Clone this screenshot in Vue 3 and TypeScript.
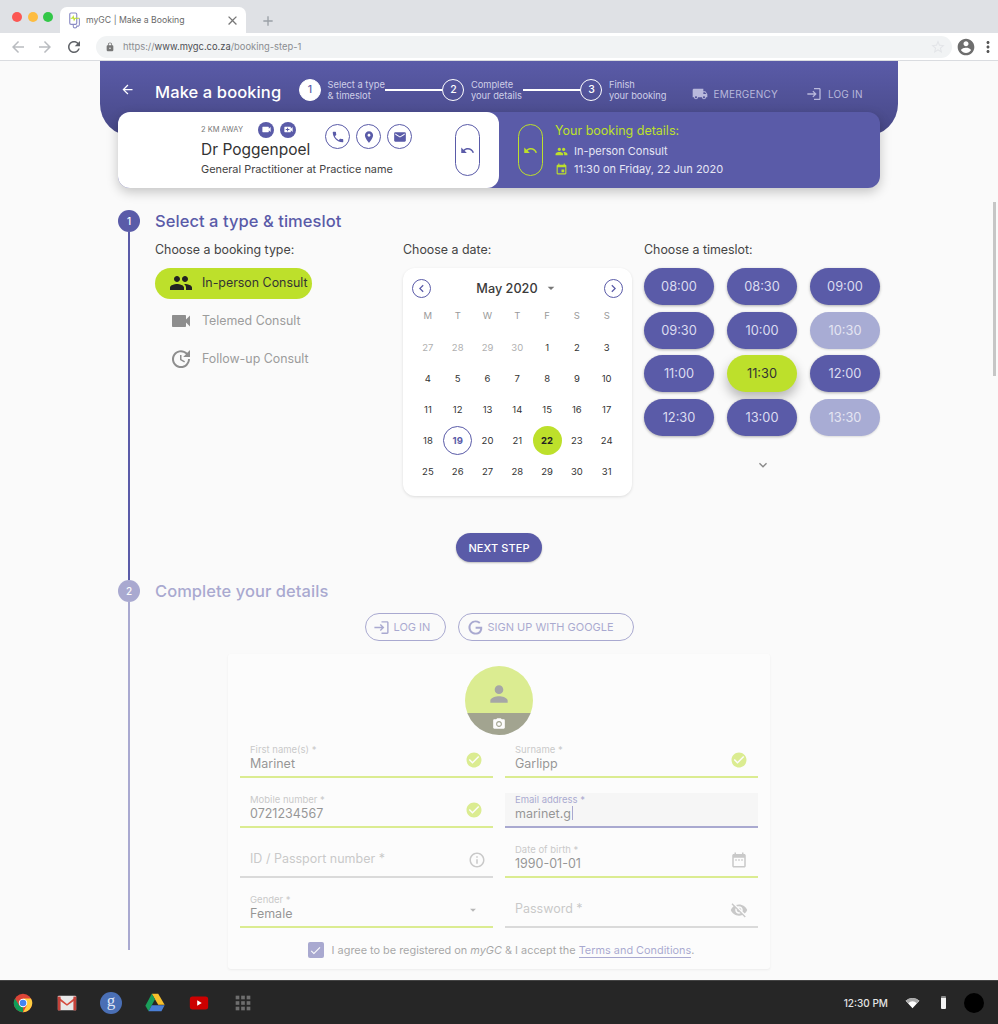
<script setup lang="ts">
const icons: Record<string, string> = {
  back: 'M20 11H7.83l5.59-5.59L12 4l-8 8 8 8 1.41-1.41L7.83 13H20v-2z',
  forward: 'M12 4l-1.41 1.41L16.17 11H4v2h12.17l-5.58 5.59L12 20l8-8z',
  refresh: 'M17.65 6.35C16.2 4.9 14.21 4 12 4c-4.42 0-7.99 3.58-7.99 8s3.57 8 7.99 8c3.73 0 6.84-2.55 7.73-6h-2.08c-.82 2.33-3.04 4-5.65 4-3.31 0-6-2.69-6-6s2.69-6 6-6c1.66 0 3.14.69 4.22 1.78L13 11h7V4l-2.35 2.35z',
  lock: 'M18 8h-1V6c0-2.76-2.24-5-5-5S7 3.24 7 6v2H6c-1.1 0-2 .9-2 2v10c0 1.1.9 2 2 2h12c1.1 0 2-.9 2-2V10c0-1.1-.9-2-2-2zm-6 9c-1.1 0-2-.9-2-2s.9-2 2-2 2 .9 2 2-.9 2-2 2zm3.1-9H8.9V6c0-1.71 1.39-3.1 3.1-3.1 1.71 0 3.1 1.39 3.1 3.1v2z',
  account: 'M12 2C6.48 2 2 6.48 2 12s4.48 10 10 10 10-4.48 10-10S17.52 2 12 2zm0 3c1.66 0 3 1.34 3 3s-1.34 3-3 3-3-1.34-3-3 1.34-3 3-3zm0 14.2c-2.5 0-4.71-1.28-6-3.22.03-1.99 4-3.08 6-3.08 1.99 0 5.97 1.09 6 3.08-1.29 1.94-3.5 3.22-6 3.22z',
  more: 'M12 8c1.1 0 2-.9 2-2s-.9-2-2-2-2 .9-2 2 .9 2 2 2zm0 2c-1.1 0-2 .9-2 2s.9 2 2 2 2-.9 2-2-.9-2-2-2zm0 6c-1.1 0-2 .9-2 2s.9 2 2 2 2-.9 2-2-.9-2-2-2z',
  star: 'M22 9.24l-7.19-.62L12 2 9.19 8.63 2 9.24l5.46 4.73L5.82 21 12 17.27 18.18 21l-1.63-7.03L22 9.24zM12 15.4l-3.76 2.27 1-4.28-3.32-2.88 4.38-.38L12 6.1l1.71 4.04 4.38.38-3.32 2.88 1 4.28L12 15.4z',
  close: 'M19 6.41L17.59 5 12 10.59 6.41 5 5 6.41 10.59 12 5 17.59 6.41 19 12 13.41 17.59 19 19 17.59 13.41 12z',
  add: 'M19 13h-6v6h-2v-6H5v-2h6V5h2v6h6v2z',
  login: 'M11 7L9.6 8.4l2.6 2.6H2v2h10.2l-2.6 2.6L11 17l5-5-5-5zm9 12h-8v2h8c1.1 0 2-.9 2-2V5c0-1.1-.9-2-2-2h-8v2h8v14z',
  truck: 'M20 8h-3V4H3c-1.1 0-2 .9-2 2v11h2c0 1.66 1.34 3 3 3s3-1.34 3-3h6c0 1.66 1.34 3 3 3s3-1.34 3-3h2v-5l-3-4zM6 18.5c-.83 0-1.5-.67-1.5-1.5s.67-1.5 1.5-1.5 1.5.67 1.5 1.5-.67 1.5-1.5 1.5zm13.5-9l1.96 2.5H17V9.5h2.5zm-1.5 9c-.83 0-1.5-.67-1.5-1.5s.67-1.5 1.5-1.5 1.5.67 1.5 1.5-.67 1.5-1.5 1.5zM8 7v2H6v2h2v2h2v-2h2V9h-2V7H8z',
  people: 'M16 11c1.66 0 2.99-1.34 2.99-3S17.66 5 16 5c-1.66 0-3 1.34-3 3s1.34 3 3 3zm-8 0c1.66 0 2.99-1.34 2.99-3S9.66 5 8 5C6.34 5 5 6.34 5 8s1.34 3 3 3zm0 2c-2.33 0-7 1.17-7 3.5V19h14v-2.5c0-2.33-4.67-3.5-7-3.5zm8 0c-.29 0-.62.02-.97.05 1.16.84 1.97 1.97 1.97 3.45V19h6v-2.5c0-2.33-4.67-3.5-7-3.5z',
  video: 'M17 10.5V7c0-.55-.45-1-1-1H4c-.55 0-1 .45-1 1v10c0 .55.45 1 1 1h12c.55 0 1-.45 1-1v-3.5l4 4v-11l-4 4z',
  videoCall: 'M17 10.5V7c0-.55-.45-1-1-1H4c-.55 0-1 .45-1 1v10c0 .55.45 1 1 1h12c.55 0 1-.45 1-1v-3.5l4 4v-11l-4 4zM14 13h-3v3H9v-3H6v-2h3V8h2v3h3v2z',
  update: 'M21 10.12h-6.78l2.74-2.82c-2.73-2.7-7.15-2.8-9.88-.1-2.73 2.71-2.73 7.08 0 9.79s7.15 2.71 9.88 0C18.32 15.65 19 14.08 19 12.1h2c0 1.98-.88 4.55-2.64 6.29-3.51 3.48-9.21 3.48-12.72 0-3.5-3.47-3.53-9.11-.02-12.58s9.14-3.47 12.65 0L21 3v7.12zM12.5 8v4.25l3.5 2.08-.72 1.21L11 13V8h1.5z',
  phone: 'M6.62 10.79c1.44 2.83 3.76 5.14 6.59 6.59l2.2-2.2c.27-.27.67-.36 1.02-.24 1.12.37 2.33.57 3.57.57.55 0 1 .45 1 1V20c0 .55-.45 1-1 1-9.39 0-17-7.61-17-17 0-.55.45-1 1-1h3.5c.55 0 1 .45 1 1 0 1.25.2 2.45.57 3.57.11.35.03.74-.25 1.02l-2.2 2.2z',
  place: 'M12 2C8.13 2 5 5.13 5 9c0 5.25 7 13 7 13s7-7.75 7-13c0-3.87-3.13-7-7-7zm0 9.5c-1.38 0-2.5-1.12-2.5-2.5s1.12-2.5 2.5-2.5 2.5 1.12 2.5 2.5-1.12 2.5-2.5 2.5z',
  email: 'M20 4H4c-1.1 0-1.99.9-1.99 2L2 18c0 1.1.9 2 2 2h16c1.1 0 2-.9 2-2V6c0-1.1-.9-2-2-2zm0 4l-8 5-8-5V6l8 5 8-5v2z',
  undo: 'M12.5 8c-2.65 0-5.05.99-6.9 2.6L2 7v9h9l-3.62-3.62c1.39-1.16 3.16-1.88 5.12-1.88 3.54 0 6.55 2.31 7.6 5.5l2.37-.78C21.08 11.03 17.15 8 12.5 8z',
  event: 'M17 12h-5v5h5v-5zM16 1v2H8V1H6v2H5c-1.11 0-1.99.9-1.99 2L3 19c0 1.1.89 2 2 2h14c1.1 0 2-.9 2-2V5c0-1.1-.9-2-2-2h-1V1h-2zm3 18H5V8h14v11z',
  left: 'M15.41 7.41L14 6l-6 6 6 6 1.41-1.41L10.83 12z',
  right: 'M10 6L8.59 7.41 13.17 12l-4.58 4.59L10 18l6-6z',
  expand: 'M16.59 8.59L12 13.17 7.41 8.59 6 10l6 6 6-6z',
  drop: 'M7 10l5 5 5-5z',
  person: 'M12 12c2.21 0 4-1.79 4-4s-1.79-4-4-4-4 1.79-4 4 1.79 4 4 4zm0 2c-2.67 0-8 1.34-8 4v2h16v-2c0-2.66-5.33-4-8-4z',
  camera: 'M9 2L7.17 4H4c-1.1 0-2 .9-2 2v12c0 1.1.9 2 2 2h16c1.1 0 2-.9 2-2V6c0-1.1-.9-2-2-2h-3.17L15 2H9zm3 15c-2.76 0-5-2.24-5-5s2.24-5 5-5 5 2.24 5 5-2.24 5-5 5zm0-8.2a3.2 3.2 0 1 0 0 6.4 3.2 3.2 0 0 0 0-6.4z',
  check: 'M12 2C6.48 2 2 6.48 2 12s4.48 10 10 10 10-4.48 10-10S17.52 2 12 2zm-2 15l-5-5 1.41-1.41L10 14.17l7.59-7.59L19 8l-9 9z',
  tick: 'M9 16.17L4.83 12l-1.42 1.41L9 19 21 7l-1.41-1.41z',
  info: 'M11 7h2v2h-2zm0 4h2v6h-2zm1-9C6.48 2 2 6.48 2 12s4.48 10 10 10 10-4.48 10-10S17.52 2 12 2zm0 18c-4.41 0-8-3.59-8-8s3.59-8 8-8 8 3.59 8 8-3.59 8-8 8z',
  date: 'M9 11H7v2h2v-2zm4 0h-2v2h2v-2zm4 0h-2v2h2v-2zm2-7h-1V2h-2v2H8V2H6v2H5c-1.11 0-1.99.9-1.99 2L3 20c0 1.1.89 2 2 2h14c1.1 0 2-.9 2-2V6c0-1.1-.9-2-2-2zm0 16H5V9h14v11z',
  eyeOff: 'M12 7c2.76 0 5 2.24 5 5 0 .65-.13 1.26-.36 1.83l2.92 2.92c1.51-1.26 2.7-2.89 3.43-4.75-1.73-4.39-6-7.5-11-7.5-1.4 0-2.74.25-3.98.7l2.16 2.16C10.74 7.13 11.35 7 12 7zM2 4.27l2.28 2.28.46.46C3.08 8.3 1.78 10.02 1 12c1.73 4.39 6 7.5 11 7.5 1.55 0 3.03-.3 4.38-.84l.42.42L19.73 22 21 20.73 3.27 3 2 4.27zM7.53 9.8l1.55 1.55c-.05.21-.08.43-.08.65 0 1.66 1.34 3 3 3 .22 0 .44-.03.65-.08l1.55 1.55c-.67.33-1.41.53-2.2.53-2.76 0-5-2.24-5-5 0-.79.2-1.53.53-2.2zm4.31-.78l3.15 3.15.02-.16c0-1.66-1.34-3-3-3l-.17.01z',
  google: 'M21.35 11.1h-9.17v2.73h6.51c-.33 3.81-3.5 5.44-6.5 5.44C8.36 19.27 5 16.25 5 12c0-4.1 3.2-7.27 7.2-7.27 3.09 0 4.9 1.97 4.9 1.97L19 4.72S16.56 2 12.1 2C6.42 2 2.03 6.8 2.03 12c0 5.05 4.13 10 10.22 10 5.35 0 9.25-3.67 9.25-9.09 0-1.15-.15-1.81-.15-1.81z',
}

const steps = [
  { n: 1, lines: ['Select a type', '& timeslot'], active: true },
  { n: 2, lines: ['Complete', 'your details'], active: false },
  { n: 3, lines: ['Finish', 'your booking'], active: false },
]

const bookingTypes = [
  { label: 'In-person Consult', icon: 'people', active: true },
  { label: 'Telemed Consult', icon: 'video', active: false },
  { label: 'Follow-up Consult', icon: 'update', active: false },
]

const weekdays = ['M', 'T', 'W', 'T', 'F', 'S', 'S']
const prevDays = [27, 28, 29, 30]
const days = Array.from({ length: 31 }, (_, i) => i + 1)

const slots = [
  { t: '08:00' }, { t: '08:30' }, { t: '09:00' },
  { t: '09:30' }, { t: '10:00' }, { t: '10:30', off: true },
  { t: '11:00' }, { t: '11:30', on: true }, { t: '12:00' },
  { t: '12:30' }, { t: '13:00' }, { t: '13:30', off: true },
]

const fields = [
  { label: 'First name(s) *', value: 'Marinet', icon: 'check', state: 'ok' },
  { label: 'Surname *', value: 'Garlipp', icon: 'check', state: 'ok' },
  { label: 'Mobile number *', value: '0721234567', icon: 'check', state: 'ok' },
  { label: 'Email address *', value: 'marinet.g', icon: '', state: 'focus' },
  { label: 'ID / Passport number *', value: '', icon: 'info', state: '' },
  { label: 'Date of birth *', value: '1990-01-01', icon: 'date', state: 'ok' },
  { label: 'Gender *', value: 'Female', icon: 'drop', state: 'ok' },
  { label: 'Password *', value: '', icon: 'eyeOff', state: '' },
]
</script>

<template>
  <div class="screen">
    <div class="browser">
      <div class="tabbar">
        <div class="lights">
          <span class="light red"></span>
          <span class="light yellow"></span>
          <span class="light green"></span>
        </div>
        <div class="tab">
          <svg class="favicon" viewBox="0 0 16 20">
            <rect x="2" y="2" width="8" height="13" rx="1.5" stroke="#8a8bc4" stroke-width="1.3" />
            <path d="M3 8h2l1-2 1 4 1-2h5" stroke="#bde02b" stroke-width="1.2" />
            <path d="M6 15v2a2 2 0 0 0 4 0h2a2 2 0 0 0 1-2V8" stroke="#8a8bc4" stroke-width="1.2" />
          </svg>
          <span class="tab-title">myGC | Make a Booking</span>
          <svg class="tab-close" viewBox="0 0 24 24"><path :d="icons.close" /></svg>
        </div>
        <svg class="tab-add" viewBox="0 0 24 24"><path :d="icons.add" /></svg>
      </div>
      <div class="toolbar">
        <svg class="nav nav-off" viewBox="0 0 24 24"><path :d="icons.back" /></svg>
        <svg class="nav nav-off" viewBox="0 0 24 24"><path :d="icons.forward" /></svg>
        <svg class="nav nav-on" viewBox="0 0 24 24"><path :d="icons.refresh" /></svg>
        <div class="omnibox">
          <svg class="lock" viewBox="0 0 24 24"><path :d="icons.lock" /></svg>
          <span class="url">https://<b>www.mygc.co.za</b>/booking-step-1</span>
          <svg class="star" viewBox="0 0 24 24"><path :d="icons.star" /></svg>
        </div>
        <svg class="profile" viewBox="0 0 24 24"><path :d="icons.account" /></svg>
        <svg class="kebab" viewBox="0 0 24 24"><path :d="icons.more" /></svg>
      </div>
    </div>

    <main class="page">
      <span class="scrollbar"></span>

      <header class="band">
        <div class="band-row">
          <svg class="band-back" viewBox="0 0 24 24"><path :d="icons.back" /></svg>
          <h1 class="band-title">Make a booking</h1>
          <template v-for="(s, i) in steps" :key="s.n">
            <span class="step-dot" :class="{ filled: s.active }">{{ s.n }}</span>
            <span class="step-text">{{ s.lines[0] }}<br />{{ s.lines[1] }}</span>
            <span v-if="i < 2" class="step-line"></span>
          </template>
          <a class="band-link emergency">
            <svg viewBox="0 0 24 24"><path :d="icons.truck" /></svg>EMERGENCY
          </a>
          <a class="band-link login">
            <svg viewBox="0 0 24 24"><path :d="icons.login" /></svg>LOG IN
          </a>
        </div>
      </header>

      <section class="summary">
        <div class="doctor">
          <div class="doctor-info">
            <div class="doctor-top">
              <div class="doctor-main">
                <div class="meta">
                  <span class="distance">2 KM AWAY</span>
                  <span class="mini"><svg viewBox="0 0 24 24"><path :d="icons.video" /></svg></span>
                  <span class="mini"><svg viewBox="0 0 24 24"><path :d="icons.videoCall" /></svg></span>
                </div>
                <div class="doctor-name">Dr Poggenpoel</div>
              </div>
              <div class="actions">
                <span class="action"><svg viewBox="0 0 24 24"><path :d="icons.phone" /></svg></span>
                <span class="action"><svg viewBox="0 0 24 24"><path :d="icons.place" /></svg></span>
                <span class="action"><svg viewBox="0 0 24 24"><path :d="icons.email" /></svg></span>
              </div>
            </div>
            <div class="doctor-role">General Practitioner at Practice name</div>
          </div>
          <span class="undo"><svg viewBox="0 0 24 24"><path :d="icons.undo" /></svg></span>
        </div>
        <div class="details">
          <span class="undo lime"><svg viewBox="0 0 24 24"><path :d="icons.undo" /></svg></span>
          <div class="details-text">
            <div class="details-title">Your booking details:</div>
            <div class="details-row">
              <svg viewBox="0 0 24 24"><path :d="icons.people" /></svg>In-person Consult
            </div>
            <div class="details-row">
              <svg viewBox="0 0 24 24"><path :d="icons.event" /></svg>11:30 on Friday, 22 Jun 2020
            </div>
          </div>
        </div>
      </section>

      <section class="stage first">
        <div class="rail">
          <span class="rail-dot">1</span>
          <span class="rail-line"></span>
        </div>
        <div class="stage-body">
          <h2 class="stage-title">Select a type &amp; timeslot</h2>
          <div class="choices">
            <div class="col-type">
              <p class="choose">Choose a booking type:</p>
              <div
                v-for="b in bookingTypes"
                :key="b.label"
                class="type-pill"
                :class="{ active: b.active }"
              >
                <svg viewBox="0 0 24 24"><path :d="icons[b.icon]" /></svg>
                <span>{{ b.label }}</span>
              </div>
            </div>

            <div class="col-date">
              <p class="choose">Choose a date:</p>
              <div class="calendar">
                <div class="cal-head">
                  <span class="cal-nav"><svg viewBox="0 0 24 24"><path :d="icons.left" /></svg></span>
                  <span class="cal-month">May 2020
                    <svg viewBox="0 0 24 24"><path :d="icons.drop" /></svg>
                  </span>
                  <span class="cal-nav"><svg viewBox="0 0 24 24"><path :d="icons.right" /></svg></span>
                </div>
                <div class="cal-grid">
                  <span v-for="(w, i) in weekdays" :key="'w' + i" class="cal-week">{{ w }}</span>
                  <span v-for="d in prevDays" :key="'p' + d" class="cal-day muted">{{ d }}</span>
                  <span
                    v-for="d in days"
                    :key="d"
                    class="cal-day"
                    :class="{ today: d === 19, picked: d === 22 }"
                  >{{ d }}</span>
                </div>
              </div>
            </div>

            <div class="col-slot">
              <p class="choose">Choose a timeslot:</p>
              <div class="slots">
                <span
                  v-for="s in slots"
                  :key="s.t"
                  class="slot"
                  :class="{ off: s.off, on: s.on }"
                >{{ s.t }}</span>
              </div>
              <svg class="slot-more" viewBox="0 0 24 24"><path :d="icons.expand" /></svg>
            </div>
          </div>
          <div class="next-row">
            <button class="next" type="button">NEXT STEP</button>
          </div>
        </div>
      </section>

      <section class="stage second">
        <div class="rail short">
          <span class="rail-dot">2</span>
          <span class="rail-line"></span>
        </div>
        <div class="stage-body">
          <h2 class="stage-title">Complete your details</h2>
          <div class="form-wrap">
            <div class="auth">
              <button class="auth-btn" type="button">
                <svg viewBox="0 0 24 24"><path :d="icons.login" /></svg>LOG IN
              </button>
              <button class="auth-btn google" type="button">
                <svg viewBox="0 0 24 24"><path :d="icons.google" /></svg>SIGN UP WITH GOOGLE
              </button>
            </div>
            <div class="form-card">
              <div class="avatar">
                <div class="avatar-top"><svg viewBox="0 0 24 24"><path :d="icons.person" /></svg></div>
                <div class="avatar-bottom"><svg viewBox="0 0 24 24"><path :d="icons.camera" /></svg></div>
              </div>
              <div class="fields">
                <div
                  v-for="f in fields"
                  :key="f.label"
                  class="field"
                  :class="[f.state, { empty: !f.value }]"
                >
                  <div class="field-text">
                    <span class="field-label">{{ f.label }}</span>
                    <span v-if="f.value" class="field-value">{{ f.value }}<i v-if="f.state === 'focus'" class="caret"></i></span>
                  </div>
                  <svg v-if="f.icon" class="field-icon" :class="f.icon" viewBox="0 0 24 24"><path :d="icons[f.icon]" /></svg>
                </div>
              </div>
              <div class="agree">
                <span class="box"><svg viewBox="0 0 24 24"><path :d="icons.tick" /></svg></span>
                <span>I agree to be registered on <em>myGC</em> &amp; I accept the <a class="terms">Terms and Conditions</a>.</span>
              </div>
            </div>
          </div>
        </div>
      </section>
    </main>

    <footer class="taskbar">
      <svg class="app" viewBox="0 0 24 24">
        <circle cx="12" cy="12" r="10" fill="#db4437" />
        <path d="M12 7h8.7A10 10 0 0 1 12 22l4-7z" fill="#ffcd40" />
        <path d="M3.3 7L8 15l4 0 0 7A10 10 0 0 1 3.3 7z" fill="#0f9d58" />
        <circle cx="12" cy="12" r="4.6" fill="#fff" />
        <circle cx="12" cy="12" r="3.6" fill="#4285f4" />
      </svg>
      <svg class="app" viewBox="0 0 24 24">
        <rect x="2" y="4" width="20" height="16" rx="1" fill="#e8e8e8" />
        <path d="M2 5l10 8 10-8v3l-10 7L2 8z" fill="#d54c3f" />
        <rect x="2" y="5" width="3" height="15" fill="#c4423a" />
        <rect x="19" y="5" width="3" height="15" fill="#c4423a" />
      </svg>
      <span class="app gplus">g</span>
      <svg class="app" viewBox="0 0 24 24">
        <path d="M8.5 2h7l7 12h-7z" fill="#f6c02c" />
        <path d="M8.5 2L1.5 15l3.5 6 7-13z" fill="#1a9e5a" />
        <path d="M5 21l3.5-6.5h14L19 21z" fill="#4a7fd6" />
      </svg>
      <svg class="app" viewBox="0 0 24 24">
        <rect x="2" y="5" width="20" height="14" rx="3" fill="#cc0000" />
        <path d="M10 9l5 3-5 3z" fill="#fff" />
      </svg>
      <svg class="app launcher" viewBox="0 0 24 24">
        <rect v-for="c in 9" :key="c" :x="4 + ((c - 1) % 3) * 6" :y="4 + Math.floor((c - 1) / 3) * 6" width="4" height="4" fill="#6e6e6e" />
      </svg>
      <span class="clock">12:30 PM</span>
      <svg class="wifi" viewBox="0 0 24 24"><path d="M1 9a16 16 0 0 1 22 0L12 21z" fill="#fff" /><path d="M1 9a16 16 0 0 1 22 0l-4 4a11 11 0 0 0-14 0z" fill="#a8a8a8" /></svg>
      <span class="battery"></span>
      <span class="user"></span>
    </footer>
  </div>
</template>

<style>
html,
body {
  margin: 0;
  background: #fafafa;
}
</style>

<style scoped>
.screen {
  width: 998px;
  height: 1024px;
  display: flex;
  flex-direction: column;
  overflow: hidden;
  font-family: Inter, "Liberation Sans", sans-serif;
  color: #333;
}

svg {
  fill: currentColor;
  flex: none;
}

/* browser chrome */
.browser {
  flex: none;
  height: 61px;
  box-sizing: border-box;
  border-bottom: 1px solid #dadce0;
  background: #fff;
}

.tabbar {
  height: 33px;
  box-sizing: border-box;
  padding-top: 7px;
  background: #dfe1e5;
  display: flex;
  align-items: flex-end;
}

.lights {
  width: 60px;
  align-self: flex-start;
  display: flex;
  gap: 5.5px;
  padding: 5px 0 0 12px;
  box-sizing: border-box;
}

.light {
  width: 10px;
  height: 10px;
  border-radius: 50%;
}

.red { background: #fc5753; }
.yellow { background: #fdbc40; }
.green { background: #33c748; }

.tab {
  width: 186px;
  height: 26px;
  box-sizing: border-box;
  background: #fff;
  border-radius: 7px 7px 0 0;
  display: flex;
  align-items: center;
  padding: 0 6px 0 8px;
}

.favicon {
  width: 14px;
  height: 18px;
  fill: none;
}

.tab-title {
  margin-left: 4px;
  flex: 1;
  font-size: 8.7px;
  color: #6a6a6a;
}

.tab-close {
  width: 15px;
  height: 15px;
  color: #777;
}

.tab-add {
  width: 16px;
  height: 16px;
  margin: 0 0 4px 14px;
  color: #9aa0a6;
}

.toolbar {
  height: 27px;
  display: flex;
  align-items: center;
  padding-left: 9px;
}

.nav {
  width: 18px;
  height: 18px;
  margin-right: 9px;
}

.nav-off { color: #b9bcc0; }
.nav-on { color: #606368; margin-left: 2px; }

.omnibox {
  width: 856px;
  height: 22px;
  margin-left: 4px;
  padding: 0 6px 0 9px;
  box-sizing: border-box;
  border-radius: 11px;
  background: #f1f3f4;
  display: flex;
  align-items: center;
  font-size: 9.4px;
  color: #8a8d91;
}

.lock {
  width: 10px;
  height: 10px;
  margin-right: 8px;
  color: #777;
}

.url {
  flex: 1;
}

.url b {
  font-weight: 400;
  color: #4d4f53;
}

.star {
  width: 16px;
  height: 16px;
  color: #e3e5e8;
}

.profile {
  width: 20px;
  height: 20px;
  margin-left: 4px;
  color: #6e6e6e;
}

.kebab {
  width: 18px;
  height: 18px;
  margin-left: 3px;
  color: #555;
}

/* page */
.page {
  flex: 1;
  min-height: 0;
  position: relative;
  background: #fafafa;
  overflow: hidden;
}

.scrollbar {
  position: absolute;
  top: 141px;
  right: 2px;
  width: 3px;
  height: 174px;
  background: #c6c6c6;
}

.band {
  margin: 0 100px;
  height: 75px;
  border-radius: 0 0 32px 32px;
  background: linear-gradient(#5a5ba8, #474886);
}

.band-row {
  height: 59px;
  display: flex;
  align-items: center;
  padding-left: 20px;
  color: #fff;
}

.band-back {
  width: 15px;
  height: 15px;
  margin-top: -2px;
}

.band-title {
  width: 144px;
  margin: 2px 0 0 20px;
  font-size: 16.5px;
  font-weight: 500;
  letter-spacing: 0.1px;
}

.step-dot {
  flex: none;
  width: 22px;
  height: 22px;
  box-sizing: border-box;
  border: 1.5px solid #fff;
  border-radius: 50%;
  display: flex;
  align-items: center;
  justify-content: center;
  font-size: 10.5px;
  font-weight: 500;
  margin-top: -2px;
}

.step-dot.filled {
  background: #fff;
  color: #5a5ba8;
}

.step-text {
  flex: none;
  min-width: 52px;
  margin: -1px 0 0 6.5px;
  font-size: 9.3px;
  line-height: 11px;
  color: #cfcfe8;
}

.step-line {
  flex: none;
  width: 57.5px;
  height: 2px;
  background: #fff;
  margin-top: -2px;
}

.band-link {
  display: flex;
  align-items: center;
  font-size: 10px;
  letter-spacing: 0.2px;
  color: #b9b9dc;
  margin-top: 6px;
}

.band-link svg {
  width: 16px;
  height: 16px;
  margin-right: 6px;
}

.emergency { margin-left: 25px; }
.login { margin-left: 28px; }

.summary {
  position: relative;
  margin: -24px 118px 0;
  height: 76px;
  display: flex;
  border-radius: 12px;
  background: #5a5ba8;
  box-shadow: 0 4px 12px rgba(0, 0, 0, 0.22);
}

.doctor {
  width: 381px;
  box-sizing: border-box;
  padding: 12px 19px 12px 83px;
  display: flex;
  justify-content: space-between;
  background: #fff;
  border-radius: 12px;
}

.doctor-top {
  display: flex;
}

.doctor-main {
  width: 124px;
}

.meta {
  display: flex;
  align-items: center;
  height: 13px;
  margin-top: -1px;
  margin-bottom: 2px;
}

.distance {
  font-size: 7.5px;
  color: #777;
  width: 57px;
}

.mini {
  width: 16px;
  height: 16px;
  margin-right: 6px;
  border-radius: 50%;
  background: #5a5ba8;
  color: #fff;
  display: flex;
  align-items: center;
  justify-content: center;
}

.mini svg {
  width: 11px;
  height: 11px;
}

.doctor-name {
  font-size: 15.5px;
  line-height: 23px;
  white-space: nowrap;
  color: #333;
}

.actions {
  display: flex;
  gap: 6px;
}

.action {
  width: 25px;
  height: 25px;
  box-sizing: border-box;
  border: 1px solid #5a5ba8;
  border-radius: 50%;
  display: flex;
  align-items: center;
  justify-content: center;
  color: #5a5ba8;
}

.action svg {
  width: 14px;
  height: 14px;
}

.doctor-role {
  margin-top: 1px;
  font-size: 10.9px;
  line-height: 14px;
  white-space: nowrap;
  color: #444;
}

.undo {
  flex: none;
  width: 25px;
  height: 52px;
  box-sizing: border-box;
  border: 1px solid #5a5ba8;
  border-radius: 13px;
  display: flex;
  align-items: center;
  justify-content: center;
  color: #5a5ba8;
}

.undo svg {
  width: 15px;
  height: 15px;
}

.undo.lime {
  border-color: #bde02b;
  color: #bde02b;
}

.details {
  flex: 1;
  padding: 12px 0 0 19px;
  display: flex;
  gap: 12px;
}

.details-text {
  color: #e6e6f5;
  font-size: 11px;
}

.details-title {
  font-size: 12.5px;
  line-height: 14px;
  color: #bde02b;
}

.details-row {
  display: flex;
  align-items: center;
  height: 18px;
  margin-top: 4px;
}

.details-row + .details-row {
  margin-top: 0;
}

.details-row svg {
  width: 13px;
  height: 13px;
  margin-right: 6px;
  color: #bde02b;
}

/* stages */
.stage {
  display: flex;
  margin-left: 118px;
  gap: 15px;
}

.first {
  margin-top: 22px;
  height: 370px;
}

.rail {
  width: 22px;
  display: flex;
  flex-direction: column;
  align-items: center;
  flex: none;
}

.rail.short {
  height: 370px;
}

.rail-dot {
  flex: none;
  width: 22px;
  height: 22px;
  border-radius: 50%;
  background: #5a5ba8;
  color: #fff;
  display: flex;
  align-items: center;
  justify-content: center;
  font-size: 10px;
  font-weight: 500;
}

.rail-line {
  flex: 1;
  width: 2px;
  background: #5a5ba8;
}

.stage-body {
  width: 725px;
}

.stage-title {
  margin: 0;
  font-size: 16.5px;
  line-height: 22px;
  font-weight: 500;
  letter-spacing: 0.05px;
  color: #5a5ba8;
}

.choices {
  display: flex;
  margin-top: 9px;
}

.choose {
  margin: 0;
  height: 27px;
  font-size: 12.4px;
  line-height: 18px;
  color: #444;
}

.col-type {
  width: 248px;
}

.type-pill {
  width: 157px;
  height: 31px;
  border-radius: 16px;
  margin-bottom: 7px;
  padding: 0 0 2px 14px;
  box-sizing: border-box;
  display: flex;
  align-items: center;
  gap: 9px;
  font-size: 12.4px;
  color: #9c9c9c;
  white-space: nowrap;
}

.type-pill svg {
  width: 24px;
  height: 24px;
  color: #8e8e8e;
}

.type-pill.active {
  background: #bde02b;
  color: #333;
}

.type-pill.active svg {
  color: #222;
}

.col-date {
  width: 241px;
}

.calendar {
  width: 229px;
  height: 228px;
  box-sizing: border-box;
  padding: 10px 9px 0;
  background: #fff;
  border-radius: 12px;
  box-shadow: 0 1px 3px rgba(0, 0, 0, 0.12);
}

.cal-head {
  display: flex;
  justify-content: space-between;
  align-items: center;
  height: 20px;
}

.cal-nav {
  width: 19px;
  height: 19px;
  box-sizing: border-box;
  border: 1px solid #5a5ba8;
  border-radius: 50%;
  display: flex;
  align-items: center;
  justify-content: center;
  color: #5a5ba8;
}

.cal-nav svg {
  width: 15px;
  height: 15px;
}

.cal-month {
  display: flex;
  align-items: center;
  font-size: 12.7px;
  font-weight: 500;
  color: #3a3a3a;
}

.cal-month svg {
  width: 16px;
  height: 16px;
  margin-left: 5px;
  color: #777;
}

.cal-grid {
  display: grid;
  grid-template-columns: repeat(7, 29.8px);
  grid-auto-rows: 31px;
  margin-top: 3px;
  margin-left: 1px;
}

.cal-week,
.cal-day {
  display: flex;
  align-items: center;
  justify-content: center;
  font-size: 9.5px;
  color: #333;
}

.cal-week {
  color: #9a9a9a;
  font-size: 9.5px;
  padding-bottom: 2px;
}

.cal-day.muted {
  color: #b0b0b0;
}

.cal-day.today,
.cal-day.picked {
  width: 29px;
  height: 29px;
  margin: auto;
  border-radius: 50%;
  box-sizing: border-box;
  font-weight: 700;
}

.cal-day.today {
  border: 1px solid #5a5ba8;
  color: #5a5ba8;
}

.cal-day.picked {
  background: #bde02b;
  color: #222;
}

.col-slot {
  flex: 1;
  display: flex;
  flex-direction: column;
}

.slots {
  display: grid;
  grid-template-columns: repeat(3, 70px);
  grid-auto-rows: 37px;
  column-gap: 13px;
  row-gap: 6.6px;
}

.slot {
  display: flex;
  align-items: center;
  justify-content: center;
  border-radius: 19px;
  background: #5a5ba8;
  color: #dcdcf0;
  font-size: 12.8px;
  box-shadow: 0 1px 3px rgba(0, 0, 0, 0.3);
}

.slot.off {
  background: #a8acd4;
  color: #e4e5f2;
  box-shadow: 0 1px 2px rgba(0, 0, 0, 0.12);
}

.slot.on {
  background: #bde02b;
  color: #333;
  box-shadow: 0 6px 12px rgba(0, 0, 0, 0.28);
}

.slot-more {
  width: 16px;
  height: 16px;
  margin: 21px 0 0 111px;
  color: #888;
}

.next-row,
.form-wrap {
  width: 688px;
  display: flex;
  flex-direction: column;
  align-items: center;
}

.next-row {
  margin-top: 37px;
}

.next {
  width: 86px;
  height: 29px;
  border: 0;
  padding: 0;
  border-radius: 15px;
  background: #5a5ba8;
  color: #fff;
  font-family: inherit;
  font-size: 11px;
  font-weight: 500;
  letter-spacing: 0.1px;
  box-shadow: 0 1px 2px rgba(0, 0, 0, 0.25);
}

.second {
  opacity: 0.5;
}

.form-wrap {
  margin-top: 11px;
}

.auth {
  display: flex;
  gap: 12px;
}

.auth-btn {
  height: 28px;
  padding: 0 0 0 7px;
  box-sizing: border-box;
  border: 1px solid #5a5ba8;
  border-radius: 14px;
  background: none;
  color: #5a5ba8;
  font-family: inherit;
  font-size: 11px;
  display: flex;
  align-items: center;
  width: 81px;
}

.auth-btn.google {
  width: 176px;
  padding-left: 8px;
}

.auth-btn svg {
  width: 17px;
  height: 17px;
  margin-right: 4px;
}

.form-card {
  width: 542px;
  height: 315px;
  margin-top: 13px;
  box-sizing: border-box;
  padding-top: 12px;
  background: #fff;
  border-radius: 3px;
  box-shadow: 0 1px 2px rgba(0, 0, 0, 0.1);
  display: flex;
  flex-direction: column;
  align-items: center;
}

.avatar {
  width: 68px;
  height: 69px;
  border-radius: 50%;
  overflow: hidden;
  flex: none;
  display: flex;
  flex-direction: column;
}

.avatar-top {
  height: 47px;
  background: #bde02b;
  color: #555;
  display: flex;
  align-items: center;
  justify-content: center;
  padding-top: 8px;
  box-sizing: border-box;
}

.avatar-top svg {
  width: 26px;
  height: 26px;
}

.avatar-bottom {
  flex: 1;
  background: #4c5128;
  color: #fff;
  display: flex;
  align-items: center;
  justify-content: center;
}

.avatar-bottom svg {
  width: 14px;
  height: 14px;
}

.fields {
  display: grid;
  grid-template-columns: 253px 253px;
  grid-auto-rows: 50px;
  column-gap: 12px;
  margin-top: -7px;
  width: 518px;
}

.field {
  box-sizing: border-box;
  padding: 0 10px;
  border-bottom: 2px solid #bbb;
  display: flex;
  justify-content: space-between;
  align-items: flex-start;
}

.field.ok {
  border-bottom-color: #bde02b;
}

.field.focus {
  margin-top: 15px;
  border-bottom-color: #5a5ba8;
  background: #f3f3f3;
}

.field-text {
  display: flex;
  flex-direction: column;
  margin-top: 16px;
}

.focus .field-text {
  margin-top: 1px;
}

.empty .field-text {
  margin-top: 22px;
}

.field-label {
  font-size: 9.5px;
  line-height: 12px;
  color: #999;
}

.focus .field-label {
  color: #5a5ba8;
}

.empty .field-label {
  font-size: 12.5px;
  line-height: 18px;
}

.field-value {
  font-size: 12.5px;
  line-height: 15px;
  color: #333;
}

.caret {
  display: inline-block;
  width: 1px;
  height: 14px;
  margin-left: 1px;
  vertical-align: -2px;
  background: #5a5ba8;
}

.field-icon {
  width: 18px;
  height: 18px;
  margin-top: 23px;
  color: #999;
}

.field-icon.check {
  color: #bde02b;
}

.field-icon.info {
  margin-right: -3px;
}

.field-icon.drop {
  width: 14px;
  height: 14px;
  margin: 25px 3px 0 0;
  color: #777;
}

.agree {
  margin: 14px 0 0 4px;
  display: flex;
  align-items: center;
  gap: 8px;
  font-size: 10.9px;
  color: #555;
}

.box {
  width: 16px;
  height: 16px;
  border-radius: 2px;
  background: #5a5ba8;
  color: #fff;
  display: flex;
  align-items: center;
  justify-content: center;
}

.box svg {
  width: 13px;
  height: 13px;
}

.terms {
  color: #5a5ba8;
  border-bottom: 1px solid #5a5ba8;
}

/* taskbar */
.taskbar {
  flex: none;
  height: 44px;
  box-sizing: border-box;
  background: #262626;
  border-top: 1px solid #444;
  display: flex;
  align-items: center;
  padding-left: 12px;
  color: #fff;
}

.app {
  width: 22px;
  height: 22px;
  margin-right: 22px;
  flex: none;
}

.gplus {
  border-radius: 50%;
  background: #4a6fb5;
  color: #dfe6f5;
  font-family: "Liberation Serif", serif;
  font-size: 17px;
  line-height: 18px;
  text-align: center;
}

.launcher {
  margin-right: 0;
}

.clock {
  margin-left: auto;
  font-size: 10px;
  font-weight: 500;
  color: #e4e4e4;
}

.wifi {
  width: 15px;
  height: 15px;
  margin-left: 17px;
}

.battery {
  width: 5px;
  height: 11px;
  margin-left: 20.5px;
  background: #f2f2f2;
  border-top: 2px solid #8a8a8a;
  border-radius: 1px;
}

.user {
  width: 20px;
  height: 20px;
  margin: 0 14px 0 18.5px;
  border-radius: 50%;
  background: #000;
}
</style>
